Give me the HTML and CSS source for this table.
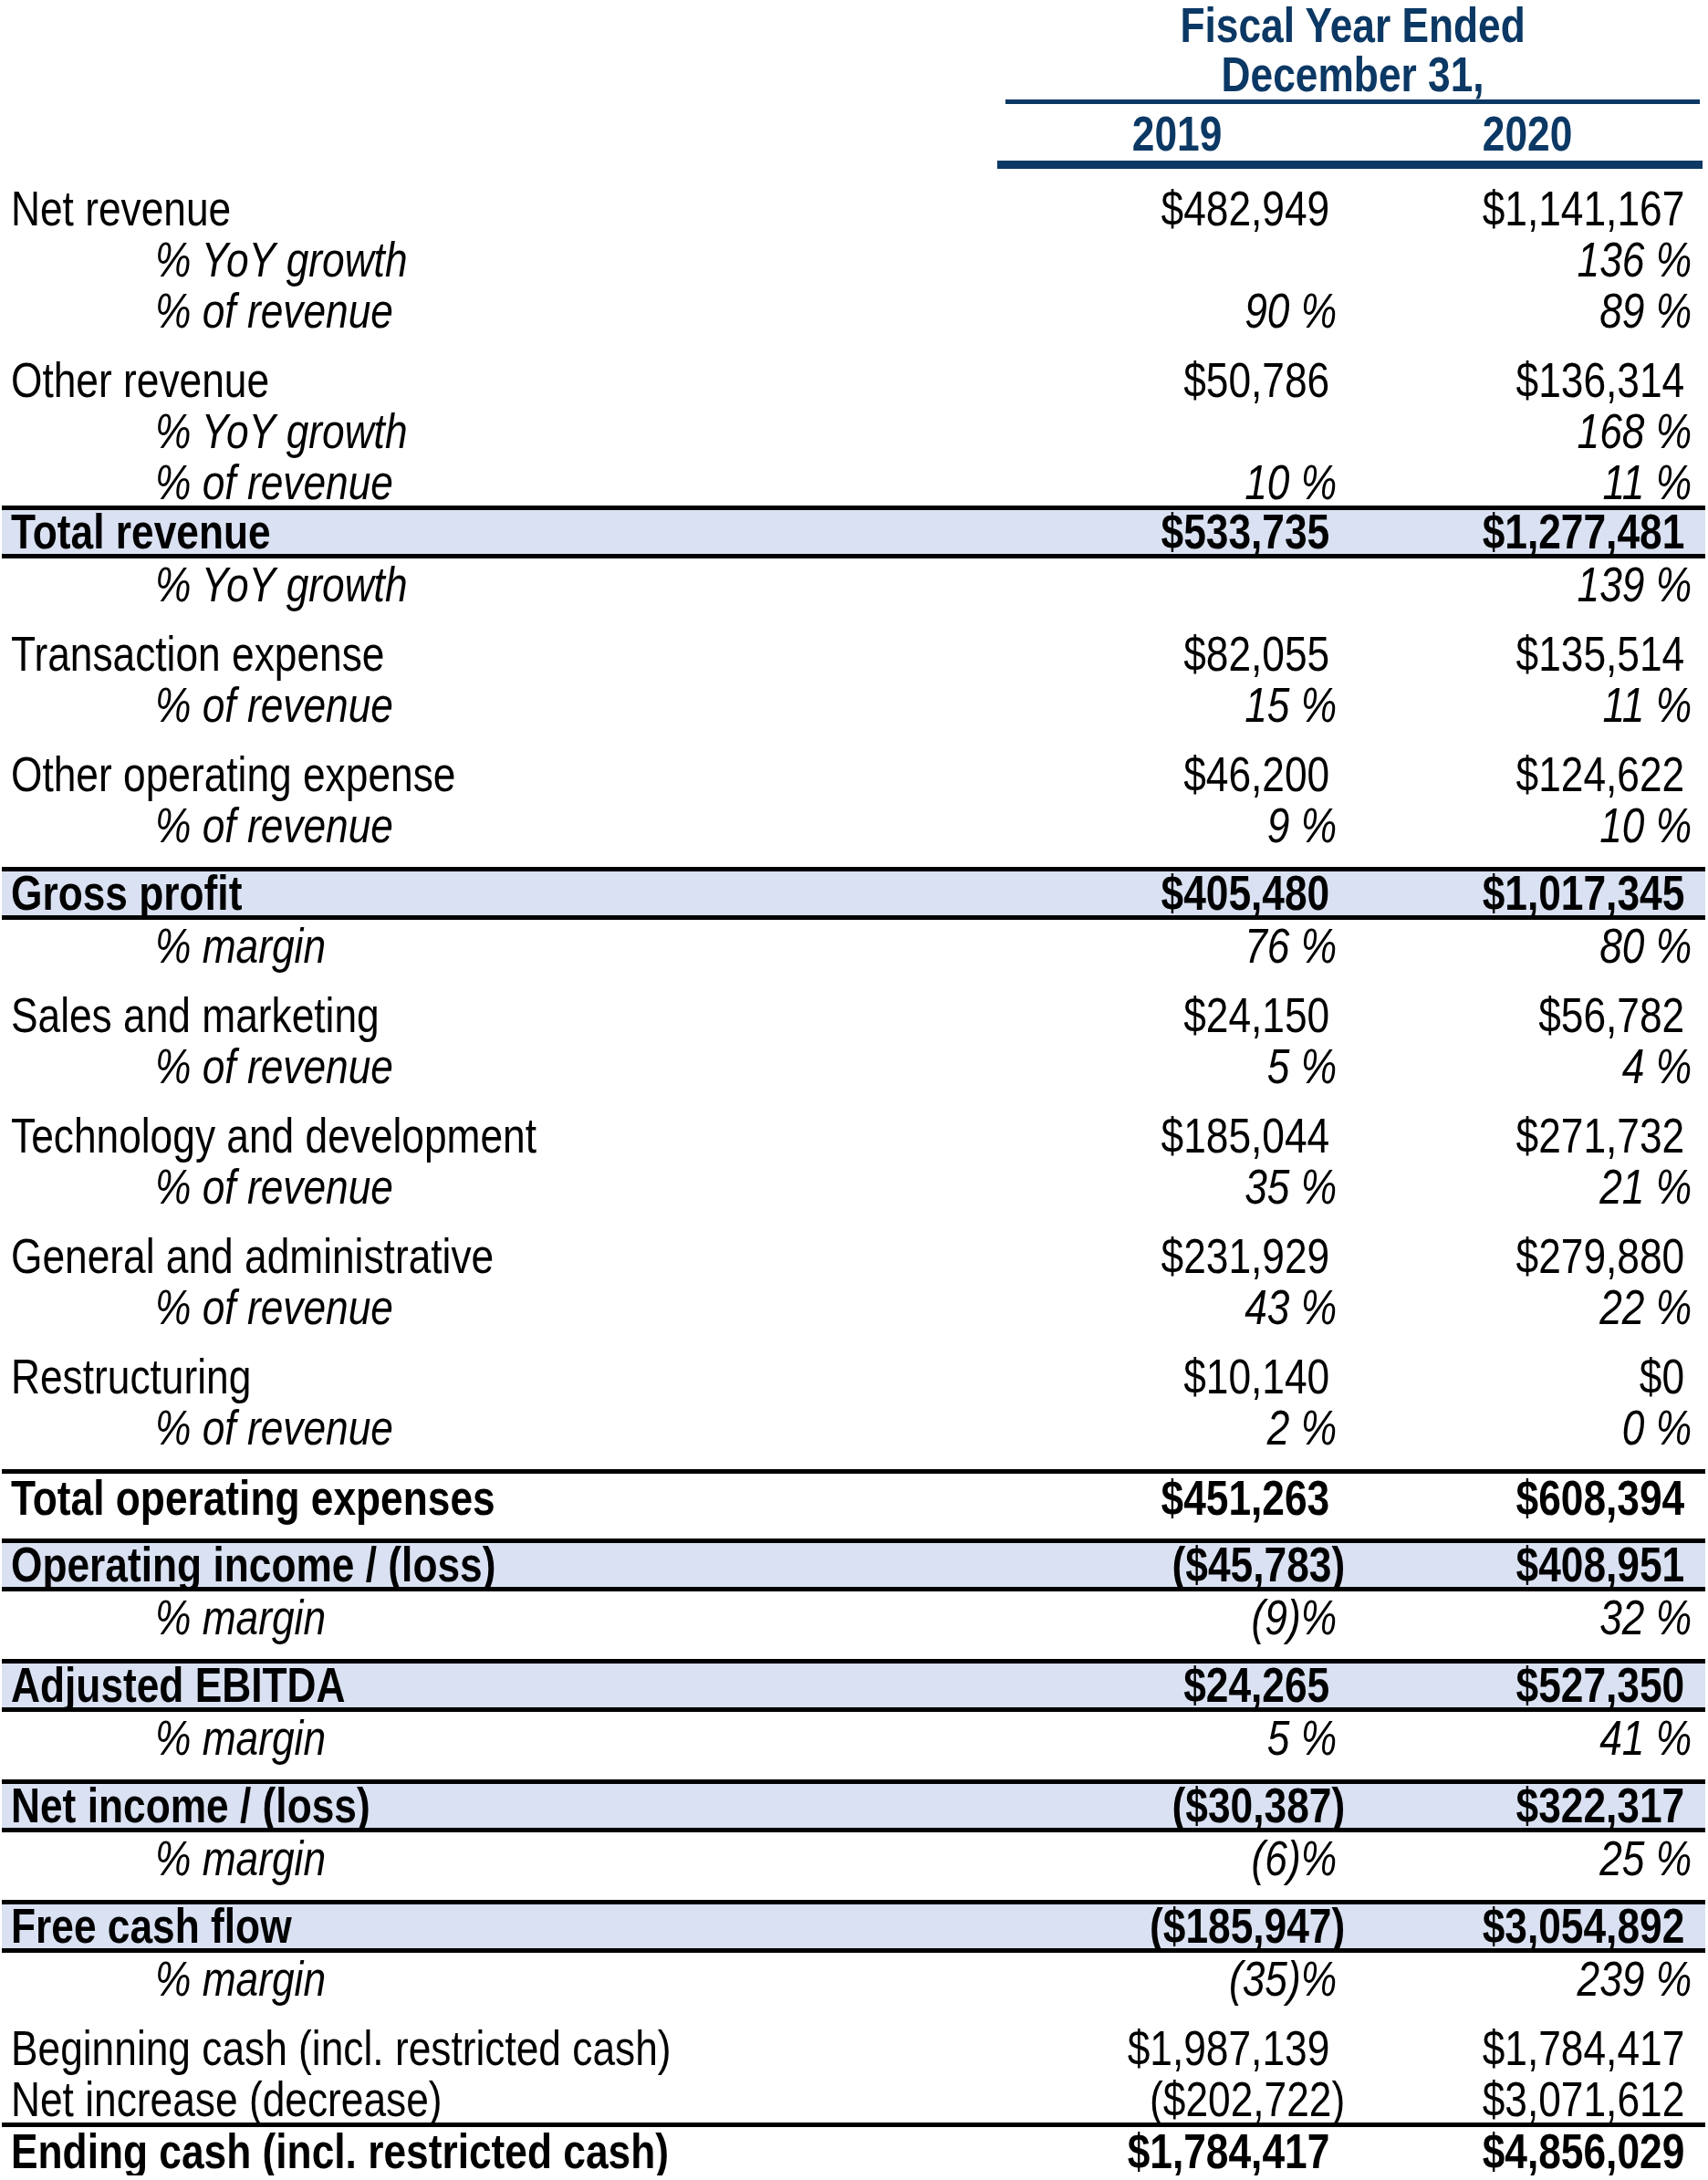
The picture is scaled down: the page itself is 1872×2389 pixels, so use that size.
FILE: index.html
```html
<!DOCTYPE html>
<html lang="en">
<head>
<meta charset="utf-8">
<title>Fiscal Year Summary</title>
<link rel="stylesheet" href="styles.css">
</head>
<body>
<div class="sheet">
  <div class="head">
    <div class="head-box">
      <div class="head-title"><span class="t">Fiscal Year Ended</span></div>
      <div class="head-title head-title--rule"><span class="t">December 31,</span></div>
      <div class="years">
        <div class="year"><span class="t">2019</span></div>
        <div class="year"><span class="t">2020</span></div>
      </div>
    </div>
  </div>

  <div class="table">
    <div class="row"><div class="lbl"><span class="t">Net revenue</span></div><div class="val pos"><span class="t">$482,949</span></div><div class="val pos"><span class="t">$1,141,167</span></div></div>
    <div class="row"><div class="lbl sub"><span class="t">% YoY growth</span></div><div class="val pct"></div><div class="val pct"><span class="t">136 %</span></div></div>
    <div class="row"><div class="lbl sub"><span class="t">% of revenue</span></div><div class="val pct"><span class="t">90 %</span></div><div class="val pct"><span class="t">89 %</span></div></div>
    <div class="gap"></div>
    <div class="row"><div class="lbl"><span class="t">Other revenue</span></div><div class="val pos"><span class="t">$50,786</span></div><div class="val pos"><span class="t">$136,314</span></div></div>
    <div class="row"><div class="lbl sub"><span class="t">% YoY growth</span></div><div class="val pct"></div><div class="val pct"><span class="t">168 %</span></div></div>
    <div class="row"><div class="lbl sub"><span class="t">% of revenue</span></div><div class="val pct"><span class="t">10 %</span></div><div class="val pct"><span class="t">11 %</span></div></div>
    <div class="row band"><div class="lbl"><span class="t">Total revenue</span></div><div class="val pos"><span class="t">$533,735</span></div><div class="val pos"><span class="t">$1,277,481</span></div></div>
    <div class="row"><div class="lbl sub"><span class="t">% YoY growth</span></div><div class="val pct"></div><div class="val pct"><span class="t">139 %</span></div></div>
    <div class="gap"></div>
    <div class="row"><div class="lbl"><span class="t">Transaction expense</span></div><div class="val pos"><span class="t">$82,055</span></div><div class="val pos"><span class="t">$135,514</span></div></div>
    <div class="row"><div class="lbl sub"><span class="t">% of revenue</span></div><div class="val pct"><span class="t">15 %</span></div><div class="val pct"><span class="t">11 %</span></div></div>
    <div class="gap"></div>
    <div class="row"><div class="lbl"><span class="t">Other operating expense</span></div><div class="val pos"><span class="t">$46,200</span></div><div class="val pos"><span class="t">$124,622</span></div></div>
    <div class="row"><div class="lbl sub"><span class="t">% of revenue</span></div><div class="val pct"><span class="t">9 %</span></div><div class="val pct"><span class="t">10 %</span></div></div>
    <div class="gap"></div>
    <div class="row band"><div class="lbl"><span class="t">Gross profit</span></div><div class="val pos"><span class="t">$405,480</span></div><div class="val pos"><span class="t">$1,017,345</span></div></div>
    <div class="row"><div class="lbl sub"><span class="t">% margin</span></div><div class="val pct"><span class="t">76 %</span></div><div class="val pct"><span class="t">80 %</span></div></div>
    <div class="gap"></div>
    <div class="row"><div class="lbl"><span class="t">Sales and marketing</span></div><div class="val pos"><span class="t">$24,150</span></div><div class="val pos"><span class="t">$56,782</span></div></div>
    <div class="row"><div class="lbl sub"><span class="t">% of revenue</span></div><div class="val pct"><span class="t">5 %</span></div><div class="val pct"><span class="t">4 %</span></div></div>
    <div class="gap"></div>
    <div class="row"><div class="lbl"><span class="t">Technology and development</span></div><div class="val pos"><span class="t">$185,044</span></div><div class="val pos"><span class="t">$271,732</span></div></div>
    <div class="row"><div class="lbl sub"><span class="t">% of revenue</span></div><div class="val pct"><span class="t">35 %</span></div><div class="val pct"><span class="t">21 %</span></div></div>
    <div class="gap"></div>
    <div class="row"><div class="lbl"><span class="t">General and administrative</span></div><div class="val pos"><span class="t">$231,929</span></div><div class="val pos"><span class="t">$279,880</span></div></div>
    <div class="row"><div class="lbl sub"><span class="t">% of revenue</span></div><div class="val pct"><span class="t">43 %</span></div><div class="val pct"><span class="t">22 %</span></div></div>
    <div class="gap"></div>
    <div class="row"><div class="lbl"><span class="t">Restructuring</span></div><div class="val pos"><span class="t">$10,140</span></div><div class="val pos"><span class="t">$0</span></div></div>
    <div class="row"><div class="lbl sub"><span class="t">% of revenue</span></div><div class="val pct"><span class="t">2 %</span></div><div class="val pct"><span class="t">0 %</span></div></div>
    <div class="gap"></div>
    <div class="row total"><div class="lbl"><span class="t">Total operating expenses</span></div><div class="val pos"><span class="t">$451,263</span></div><div class="val pos"><span class="t">$608,394</span></div></div>
    <div class="gap"></div>
    <div class="row band"><div class="lbl"><span class="t">Operating income / (loss)</span></div><div class="val"><span class="t">($45,783)</span></div><div class="val pos"><span class="t">$408,951</span></div></div>
    <div class="row"><div class="lbl sub"><span class="t">% margin</span></div><div class="val pct"><span class="t">(9)%</span></div><div class="val pct"><span class="t">32 %</span></div></div>
    <div class="gap"></div>
    <div class="row band"><div class="lbl"><span class="t">Adjusted EBITDA</span></div><div class="val pos"><span class="t">$24,265</span></div><div class="val pos"><span class="t">$527,350</span></div></div>
    <div class="row"><div class="lbl sub"><span class="t">% margin</span></div><div class="val pct"><span class="t">5 %</span></div><div class="val pct"><span class="t">41 %</span></div></div>
    <div class="gap"></div>
    <div class="row band"><div class="lbl"><span class="t">Net income / (loss)</span></div><div class="val"><span class="t">($30,387)</span></div><div class="val pos"><span class="t">$322,317</span></div></div>
    <div class="row"><div class="lbl sub"><span class="t">% margin</span></div><div class="val pct"><span class="t">(6)%</span></div><div class="val pct"><span class="t">25 %</span></div></div>
    <div class="gap"></div>
    <div class="row band"><div class="lbl"><span class="t">Free cash flow</span></div><div class="val"><span class="t">($185,947)</span></div><div class="val pos"><span class="t">$3,054,892</span></div></div>
    <div class="row"><div class="lbl sub"><span class="t">% margin</span></div><div class="val pct"><span class="t">(35)%</span></div><div class="val pct"><span class="t">239 %</span></div></div>
    <div class="gap"></div>
    <div class="row"><div class="lbl"><span class="t">Beginning cash (incl. restricted cash)</span></div><div class="val pos"><span class="t">$1,987,139</span></div><div class="val pos"><span class="t">$1,784,417</span></div></div>
    <div class="row"><div class="lbl"><span class="t">Net increase (decrease)</span></div><div class="val"><span class="t">($202,722)</span></div><div class="val pos"><span class="t">$3,071,612</span></div></div>
    <div class="row total"><div class="lbl"><span class="t">Ending cash (incl. restricted cash)</span></div><div class="val pos"><span class="t">$1,784,417</span></div><div class="val pos"><span class="t">$4,856,029</span></div></div>
  </div>
</div>
</body>
</html>
```
FILE: styles.css
```css
html, body {
  margin: 0;
  padding: 0;
  background: #ffffff;
}

.sheet {
  width: 1867px;
  margin-left: 2px;
  font-family: "Liberation Sans Narrow", "Arial Narrow", "Liberation Sans", Arial, sans-serif;
  font-size: 54px;
  color: #000000;
}

/* condensed rendering of Arial-metric text (Arial Narrow look) */
.t {
  display: inline-block;
  transform: scaleX(0.82);
  transform-origin: left center;
  white-space: nowrap;
}

/* ---------- header ---------- */
.head {
  display: flex;
  justify-content: flex-end;
  height: 200px;
  padding-right: 6px;
}

.head-box {
  width: 761px;
  display: flex;
  flex-direction: column;
  color: #0b3864;
  font-weight: bold;
}

.head-title {
  height: 54px;
  line-height: 54px;
  text-align: center;
}

.head-title .t,
.year .t {
  transform-origin: center center;
}

.head-title--rule {
  height: 60px;
  line-height: 55px;
  box-sizing: border-box;
  border-bottom: 5px solid #0b3864;
}

.years {
  display: flex;
  height: 71px;
  padding-top: 6px;
  padding-left: 5px;
  box-sizing: border-box;
  line-height: 52px;
  border-bottom: 9px solid #0b3864;
  margin: 0 -3px 0 -9px;
}

.year {
  flex: 1;
  text-align: center;
}

/* ---------- body rows ---------- */
.table {
  display: flex;
  flex-direction: column;
}

.row {
  display: grid;
  grid-template-columns: 1fr 360px 389px;
  height: 56px;
  line-height: 56px;
  padding-right: 6px;
  box-sizing: border-box;
  white-space: nowrap;
}

.gap {
  height: 20px;
}

.lbl {
  padding-left: 10px;
}

.lbl.sub {
  padding-left: 168px;
  font-style: italic;
}

.val {
  text-align: right;
}

.val .t {
  transform-origin: right center;
}

.val.pos {
  padding-right: 17px;
}

.val.pct {
  padding-right: 9px;
  font-style: italic;
}

.band {
  background: #d9e1f2;
  margin-top: -2px;
  height: 58px;
  border-top: 5px solid #000000;
  border-bottom: 5px solid #000000;
  line-height: 46px;
  font-weight: bold;
}

.total {
  margin-top: -2px;
  height: 58px;
  border-top: 5px solid #000000;
  line-height: 53px;
  font-weight: bold;
}
```
